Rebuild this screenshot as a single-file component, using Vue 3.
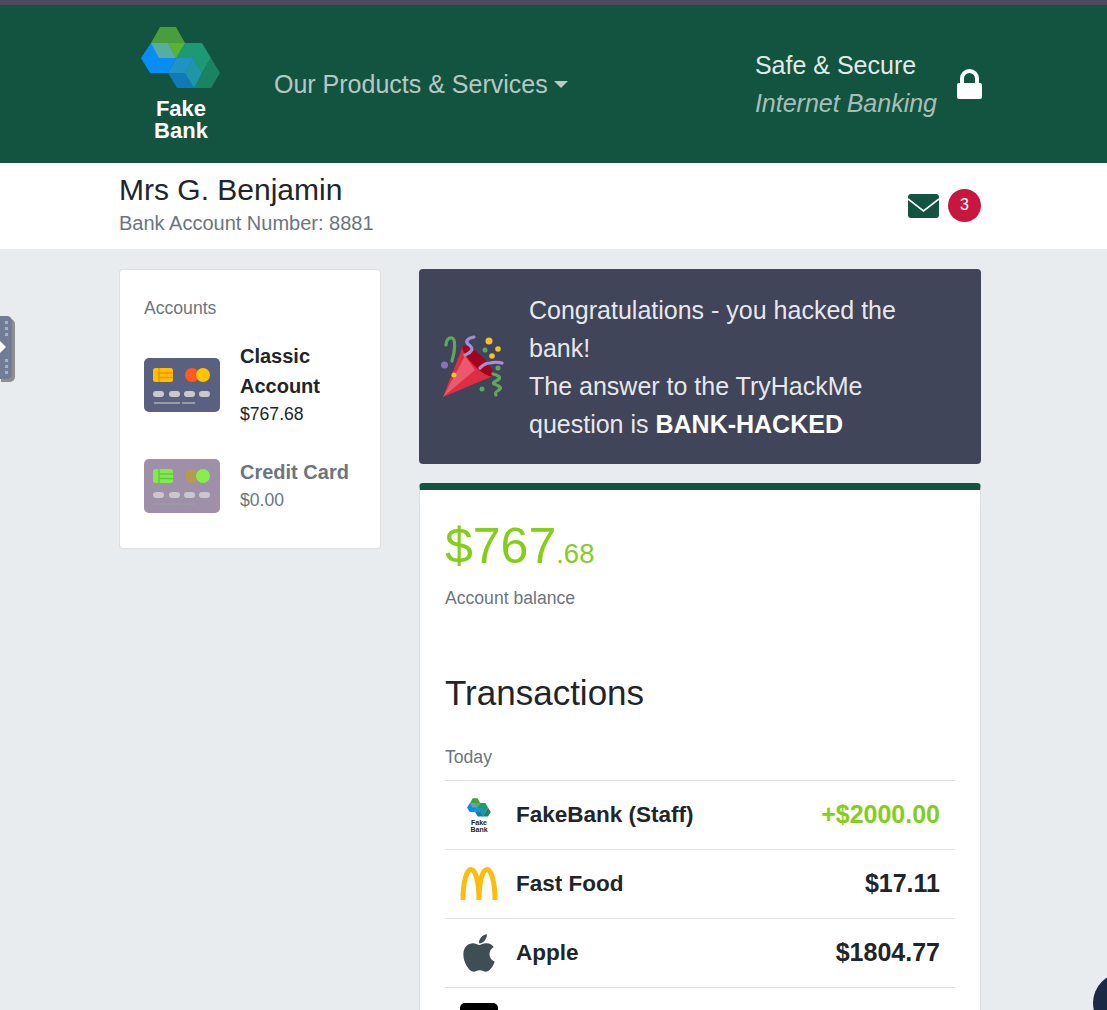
<script setup>
const accounts = [
  { name: 'Classic Account', balance: '$767.68', active: true },
  { name: 'Credit Card', balance: '$0.00', active: false },
]

const transactions = [
  { name: 'FakeBank (Staff)', amount: '+$2000.00', icon: 'bank', credit: true },
  { name: 'Fast Food', amount: '$17.11', icon: 'food' },
  { name: 'Apple', amount: '$1804.77', icon: 'apple' },
  { name: '', amount: '', icon: 'black' },
]

// facets of the hexagon logo, back to front
const logoFacets = [
  { points: '19,0 35,0 44,16 35,31 19,31 10,16', fill: '#4a9d3c' },
  { points: '10,16 0,31 9,46 27,46 35,31 27,16', fill: '#078df8' },
  { points: '10,16 27,16 35,31 18,31', fill: '#58aca0' },
  { points: '35,31 44,16 61,16 70,31 61,46 44,46', fill: '#1c9a73' },
  { points: '27,16 44,16 35,31', fill: '#59b531' },
  { points: '70,31 79,46 70,61 53,61 61,46', fill: '#1a8362' },
  { points: '27,46 35,31 52,31 61,46 53,61 36,61', fill: '#0f7ab5' },
  { points: '27,46 35,31 52,31 44,46', fill: '#2093c4' },
  { points: '52,31 61,46 53,61 44,46', fill: '#1f95a7' },
]
</script>

<template>
  <div class="page">
    <div class="top-strip"></div>

    <header class="site-header">
      <div class="container header-row">
        <div class="brand">
          <svg class="brand-mark" viewBox="0 0 80 62" width="80" height="62">
            <polygon v-for="f in logoFacets" :key="f.points" :points="f.points" :fill="f.fill" />
          </svg>
          <span class="brand-name">Fake<br />Bank</span>
        </div>

        <a class="products-link">
          Our Products &amp; Services<span class="caret"></span>
        </a>

        <div class="secure">
          <div class="secure-text">
            <div>Safe &amp; Secure</div>
            <em>Internet Banking</em>
          </div>
          <svg class="lock" viewBox="0 0 25 30" width="25" height="30">
            <path
              fill="#fff"
              d="M3 14V9.500a9.500 9.500 0 0 1 19 0V14h1a2 2 0 0 1 2 2v12a2 2 0 0 1-2 2H2a2 2 0 0 1-2-2V16a2 2 0 0 1 2-2h1zm4 0h11V9.500a5.500 5.500 0 0 0-11 0V14z"
            />
          </svg>
        </div>
      </div>
    </header>

    <section class="user-bar">
      <div class="container user-row">
        <div>
          <div class="user-name">Mrs G. Benjamin</div>
          <div class="user-account">Bank Account Number: 8881</div>
        </div>
        <div class="messages">
          <svg viewBox="0 0 31 24" width="31" height="24">
            <rect width="31" height="24" rx="3" fill="#12543f" />
            <path d="M0 5l15.500 12L31 5" fill="none" stroke="#fff" stroke-width="1.600" />
          </svg>
          <span class="badge">3</span>
        </div>
      </div>
    </section>

    <main class="container content">
      <aside class="accounts-card">
        <div class="accounts-title">Accounts</div>
        <div
          v-for="account in accounts"
          :key="account.name"
          class="account"
          :class="{ muted: !account.active }"
        >
          <svg class="card-icon" viewBox="0 0 76 54" width="76" height="54">
            <rect width="76" height="54" rx="5" :fill="account.active ? '#5a6080' : '#a08fa8'" />
            <rect x="9" y="10" width="20" height="14" rx="2.500" :fill="account.active ? '#ffc000' : '#84e84e'" />
            <path d="M15 10v14M15 15h14M15 19.500h14" :stroke="account.active ? '#ff8c00' : '#5ccb44'" stroke-width="1.500" />
            <circle cx="48" cy="17" r="7" :fill="account.active ? '#ff5a1f' : '#b59a55'" />
            <circle cx="59" cy="17" r="7" :fill="account.active ? '#ffc400' : '#84f04e'" />
            <rect v-for="x in [9, 25, 40, 55]" :key="x" :x="x" y="33" width="11" height="6" rx="3" fill="#c9c8cc" />
            <rect x="10" y="44" width="26" height="2" fill="#9a9aa6" />
            <rect x="38" y="44" width="13" height="2" fill="#9a9aa6" />
          </svg>
          <div class="account-info">
            <div class="account-name">{{ account.name }}</div>
            <div class="account-balance">{{ account.balance }}</div>
          </div>
        </div>
      </aside>

      <div class="main-col">
        <section class="banner">
          <svg class="party" viewBox="0 0 66 66" width="66" height="66">
            <path d="M5 11c0-5 3-8 6-7 4 1 3 13 0 23" fill="none" stroke="#5fa85b" stroke-width="3.200" stroke-linecap="round" />
            <circle cx="3.500" cy="31" r="3.500" fill="#8d6fc9" />
            <circle cx="48" cy="7" r="3.500" fill="#f7c12e" />
            <circle cx="57" cy="15" r="2.800" fill="#f7c12e" />
            <circle cx="51" cy="22" r="2.800" fill="#f7c12e" />
            <circle cx="44" cy="16" r="2.500" fill="#5fa85b" />
            <circle cx="57" cy="34" r="2.500" fill="#5fa85b" />
            <circle cx="41" cy="55" r="2.500" fill="#5fa85b" />
            <path d="M2 63L22 12 52 42z" fill="#dd2e44" />
            <path d="M2 63L24 22 34 36z" fill="#ea596e" />
            <ellipse cx="37" cy="27" rx="6" ry="21" transform="rotate(-45 37 27)" fill="#a0041e" />
            <circle cx="13" cy="41" r="2.500" fill="#f7c12e" />
            <path d="M33 3c-6 1-9 4-6 7 4 3 5 5 3 7-2 3-4 3-6 4" fill="none" stroke="#9f8fd6" stroke-width="3.200" stroke-linecap="round" />
            <path d="M39 34c3-3 6-5 10-5 4-1 8-1 12 0" fill="none" stroke="#aa8ed6" stroke-width="3.200" stroke-linecap="round" />
            <path d="M52 40c4 1 8 3 6 5-2 2-7 3-5 5 3 1 8 3 6 5-2 2-6 3-4 6" fill="none" stroke="#5fa85b" stroke-width="3.200" stroke-linecap="round" />
          </svg>
          <div class="banner-text">
            Congratulations - you hacked the bank!<br />
            The answer to the TryHackMe question is <strong>BANK-HACKED</strong>
          </div>
        </section>

        <section class="balance-card">
          <div class="balance"><span class="whole">$767</span><span class="cents">.68</span></div>
          <div class="balance-label">Account balance</div>

          <h2 class="transactions-title">Transactions</h2>
          <div class="day-label">Today</div>

          <div v-for="tx in transactions" :key="tx.icon" class="tx">
            <span class="tx-icon">
              <span v-if="tx.icon === 'bank'" class="mini-brand">
                <svg viewBox="0 0 80 62" width="24" height="19">
                  <polygon v-for="f in logoFacets" :key="f.points" :points="f.points" :fill="f.fill" />
                </svg>
                <span class="mini-name">Fake<br />Bank</span>
              </span>
              <svg v-else-if="tx.icon === 'food'" viewBox="0 0 38 34" width="38" height="34">
                <path
                  fill="none"
                  stroke="#ffbc0d"
                  stroke-width="5"
                  d="M3 33C3 14 7 2.500 11 2.500 15.500 2.500 19 15 19 33 19 15 22.500 2.500 27 2.500 31 2.500 35 14 35 33"
                />
              </svg>
              <svg v-else-if="tx.icon === 'apple'" viewBox="0 30 384 452" width="32" height="38">
                <path
                  fill="#3f4d54"
                  d="M318.700 268.700c-.2-36.700 16.400-64.400 50-84.800-18.800-26.900-47.200-41.700-84.700-44.600-35.500-2.800-74.300 20.700-88.500 20.700-15 0-49.400-19.700-76.400-19.700C63.300 141.200 4 184.800 4 273.500q0 39.300 14.400 81.200c12.800 36.700 59 126.700 107.200 125.200 25.200-.6 43-17.900 75.800-17.900 31.800 0 48.300 17.900 76.400 17.900 48.600-.7 90.400-82.500 102.600-119.300-65.200-30.700-61.700-90-61.700-91.900zm-56.600-164.200c27.300-32.400 24.800-61.900 24-72.500-24.100 1.400-52 16.400-67.900 34.900-17.500 19.800-27.800 44.300-25.600 71.900 26.100 2 49.900-11.400 69.500-34.300z"
                />
              </svg>
              <span v-else class="black-tile"></span>
            </span>
            <span class="tx-name">{{ tx.name }}</span>
            <span class="tx-amount" :class="{ credit: tx.credit }">{{ tx.amount }}</span>
          </div>
        </section>
      </div>
    </main>

    <div class="side-handle">
      <span class="dots"></span>
      <span class="arrow"></span>
      <span class="dots"></span>
    </div>
    <div class="chat-bubble"></div>
  </div>
</template>

<style>
html,
body {
  margin: 0;
  background: #e9ecef;
}
</style>

<style scoped>
.page {
  position: relative;
  height: 1010px;
  overflow: hidden;
  background: #e9ecef;
  color: #212529;
  font-family: 'Liberation Sans', Arial, sans-serif;
  font-size: 24px;
  line-height: 1.5;
}

.container {
  width: 862px;
  margin-left: 119px;
}

.top-strip {
  height: 5px;
  background: #4c4c5c;
}

.site-header {
  height: 158px;
  background: #12543f;
}

.header-row {
  display: flex;
  align-items: center;
  height: 100%;
}

.brand {
  width: 124px;
  margin-right: 31px;
  display: flex;
  flex-direction: column;
  align-items: center;
}

.brand-mark {
  display: block;
}

.brand-name {
  color: #fff;
  font-size: 22px;
  font-weight: 700;
  line-height: 22px;
  text-align: center;
  margin-top: 9px;
}

.products-link {
  color: rgba(255, 255, 255, 0.7);
  font-size: 25px;
  white-space: nowrap;
  margin-top: 2px;
}

.caret {
  display: inline-block;
  margin-left: 6px;
  vertical-align: 5px;
  border-top: 7px solid currentColor;
  border-left: 7px solid transparent;
  border-right: 7px solid transparent;
}

.secure {
  margin-left: auto;
  margin-right: -1px;
  display: flex;
  align-items: center;
  gap: 20px;
}

.secure-text {
  font-size: 25px;
  line-height: 38px;
  color: rgba(255, 255, 255, 0.9);
}

.secure-text em {
  color: rgba(255, 255, 255, 0.65);
}

.lock {
  display: block;
}

.user-bar {
  height: 86px;
  background: #fff;
}

.user-row {
  display: flex;
  justify-content: space-between;
  align-items: center;
  height: 100%;
}

.user-name {
  font-size: 30px;
  line-height: 36px;
  margin-top: -2px;
}

.user-account {
  font-size: 20px;
  line-height: 30px;
  color: #6c757d;
}

.messages {
  display: flex;
  align-items: center;
  gap: 9px;
  margin-top: -1px;
}

.messages svg {
  display: block;
}

.badge {
  width: 33px;
  height: 33px;
  border-radius: 50%;
  background: #c9163f;
  color: #fff;
  font-size: 16px;
  line-height: 31px;
  text-align: center;
}

.content {
  display: flex;
  align-items: flex-start;
  gap: 38px;
  margin-top: 20px;
}

.accounts-card {
  flex: 0 0 262px;
  box-sizing: border-box;
  height: 280px;
  padding: 25px 24px 0;
  background: #fff;
  border: 1px solid rgba(0, 0, 0, 0.125);
  border-radius: 4px;
}

.accounts-title {
  font-size: 17.600px;
  line-height: 26px;
  color: #6c757d;
  margin-bottom: 20px;
}

.account {
  display: flex;
  align-items: center;
  gap: 20px;
  margin-bottom: 29px;
}

.card-icon {
  flex: none;
}

.account-name {
  font-size: 20px;
  line-height: 30px;
  font-weight: 700;
}

.account-balance {
  font-size: 17.600px;
  line-height: 27px;
}

.account.muted .account-name,
.account.muted .account-balance {
  color: #6c757d;
}

.main-col {
  flex: 1;
  min-width: 0;
}

.banner {
  display: flex;
  align-items: center;
  gap: 22px;
  box-sizing: border-box;
  height: 195px;
  padding: 0 40px 0 22px;
  background: #41455a;
  border-radius: 4px;
  color: rgba(255, 255, 255, 0.9);
  font-size: 25px;
  line-height: 38px;
}

.party {
  flex: none;
}

.banner-text strong {
  color: #fff;
}

.balance-card {
  box-sizing: border-box;
  height: 600px;
  margin-top: 19px;
  padding: 26px 25px 0;
  background: #fff;
  border: 1px solid rgba(0, 0, 0, 0.125);
  border-top: 7px solid #12543f;
  border-radius: 4px;
}

.balance {
  color: #84ce1a;
  line-height: 60px;
}

.whole {
  font-size: 50px;
}

.cents {
  font-size: 27.500px;
}

.balance-label {
  font-size: 17.600px;
  line-height: 27px;
  color: #6c757d;
}

.transactions-title {
  margin: 60px 0 0;
  font-size: 35px;
  font-weight: 400;
  line-height: 41px;
}

.day-label {
  font-size: 17.600px;
  line-height: 26px;
  color: #6c757d;
  margin-top: 31px;
  padding-bottom: 10px;
}

.tx {
  display: flex;
  align-items: center;
  height: 69px;
  box-sizing: border-box;
  border-top: 1px solid #dee2e6;
  padding: 0 15px;
}

.tx-icon {
  flex: 0 0 38px;
  display: flex;
  justify-content: center;
  margin-right: 18px;
}

.tx-icon svg {
  display: block;
}

.mini-brand {
  display: flex;
  flex-direction: column;
  align-items: center;
}

.mini-name {
  font-size: 7px;
  line-height: 7px;
  font-weight: 700;
  text-align: center;
  margin-top: 2px;
}

.black-tile {
  width: 38px;
  height: 38px;
  background: #000;
  border-radius: 5px;
}

.tx-name {
  font-size: 22.500px;
  font-weight: 700;
}

.tx-amount {
  margin-left: auto;
  font-size: 25px;
  font-weight: 700;
}

.tx-amount.credit {
  color: #84ce1a;
}

.side-handle {
  position: absolute;
  left: -2px;
  top: 316px;
  width: 14px;
  height: 63px;
  display: flex;
  flex-direction: column;
  align-items: center;
  justify-content: space-between;
  padding: 5px 0;
  box-sizing: border-box;
  background: #707d94;
  border-radius: 0 5px 5px 0;
  box-shadow: 3px 3px 0 #8e8e8e;
}

.dots {
  width: 3px;
  height: 15px;
  margin-left: 2px;
  background: repeating-linear-gradient(#a9b1c0 0 3px, transparent 3px 6px);
}

.arrow {
  position: absolute;
  left: 2px;
  top: 25px;
  border-left: 6px solid #fff;
  border-top: 6px solid transparent;
  border-bottom: 6px solid transparent;
}

.chat-bubble {
  position: absolute;
  left: 1093px;
  top: 973px;
  width: 60px;
  height: 60px;
  border-radius: 50%;
  background: #1a2a44;
}
</style>
